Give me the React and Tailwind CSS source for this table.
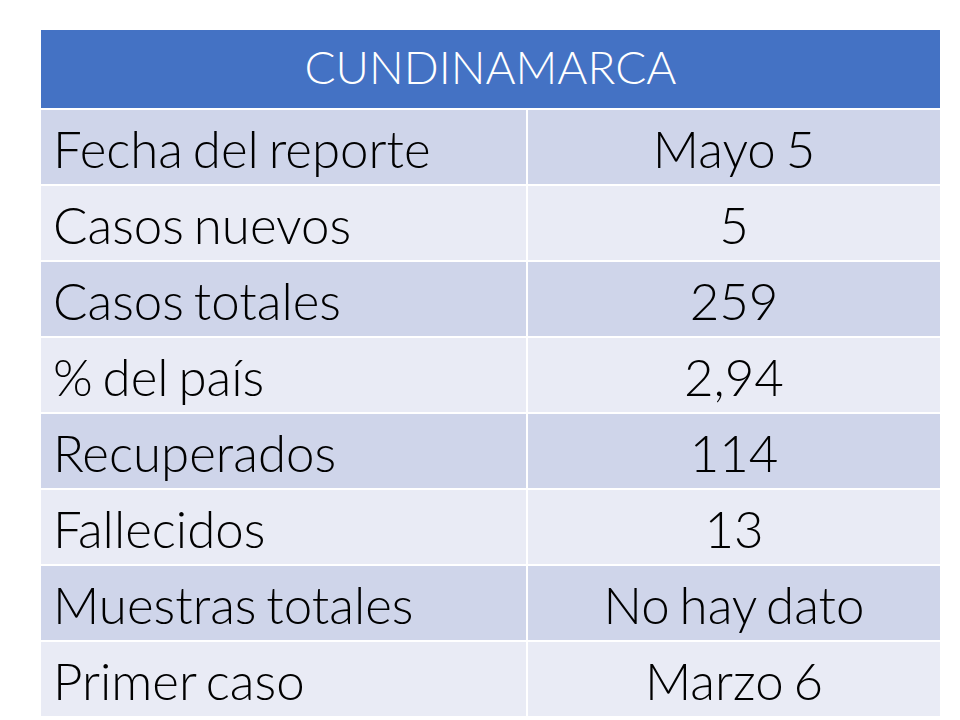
const rows = [
  ["Fecha del reporte", "Mayo 5"],
  ["Casos nuevos", "5"],
  ["Casos totales", "259"],
  ["% del país", "2,94"],
  ["Recuperados", "114"],
  ["Fallecidos", "13"],
  ["Muestras totales", "No hay dato"],
  ["Primer caso", "Marzo 6"],
]

export default function App() {
  return (
    <div className="w-[960px] h-[720px] bg-white overflow-hidden" style={{ fontFamily: "Lato, 'Open Sans', sans-serif" }}>
      <div className="ml-[41px] mt-[30px] w-[899px] flex flex-col gap-[2px]">
        <div className="h-[78px] bg-[#4472c4] flex items-center justify-center pb-[4px] text-white text-[46px] font-light leading-none">
          CUNDINAMARCA
        </div>
        {rows.map(([label, value], i) => (
          <div key={label} className="h-[74px] flex gap-[2px] text-[51px] font-light text-black leading-none [word-spacing:-4px]">
            <div className={`w-[485px] flex items-center pl-[12px] pt-[2px] ${i % 2 === 0 ? "bg-[#cfd5ea]" : "bg-[#e9ebf5]"}`}>
              {label}
            </div>
            <div className={`flex-1 flex items-center justify-center pt-[2px] ${i % 2 === 0 ? "bg-[#cfd5ea]" : "bg-[#e9ebf5]"}`}>
              {value}
            </div>
          </div>
        ))}
      </div>
    </div>
  )
}
